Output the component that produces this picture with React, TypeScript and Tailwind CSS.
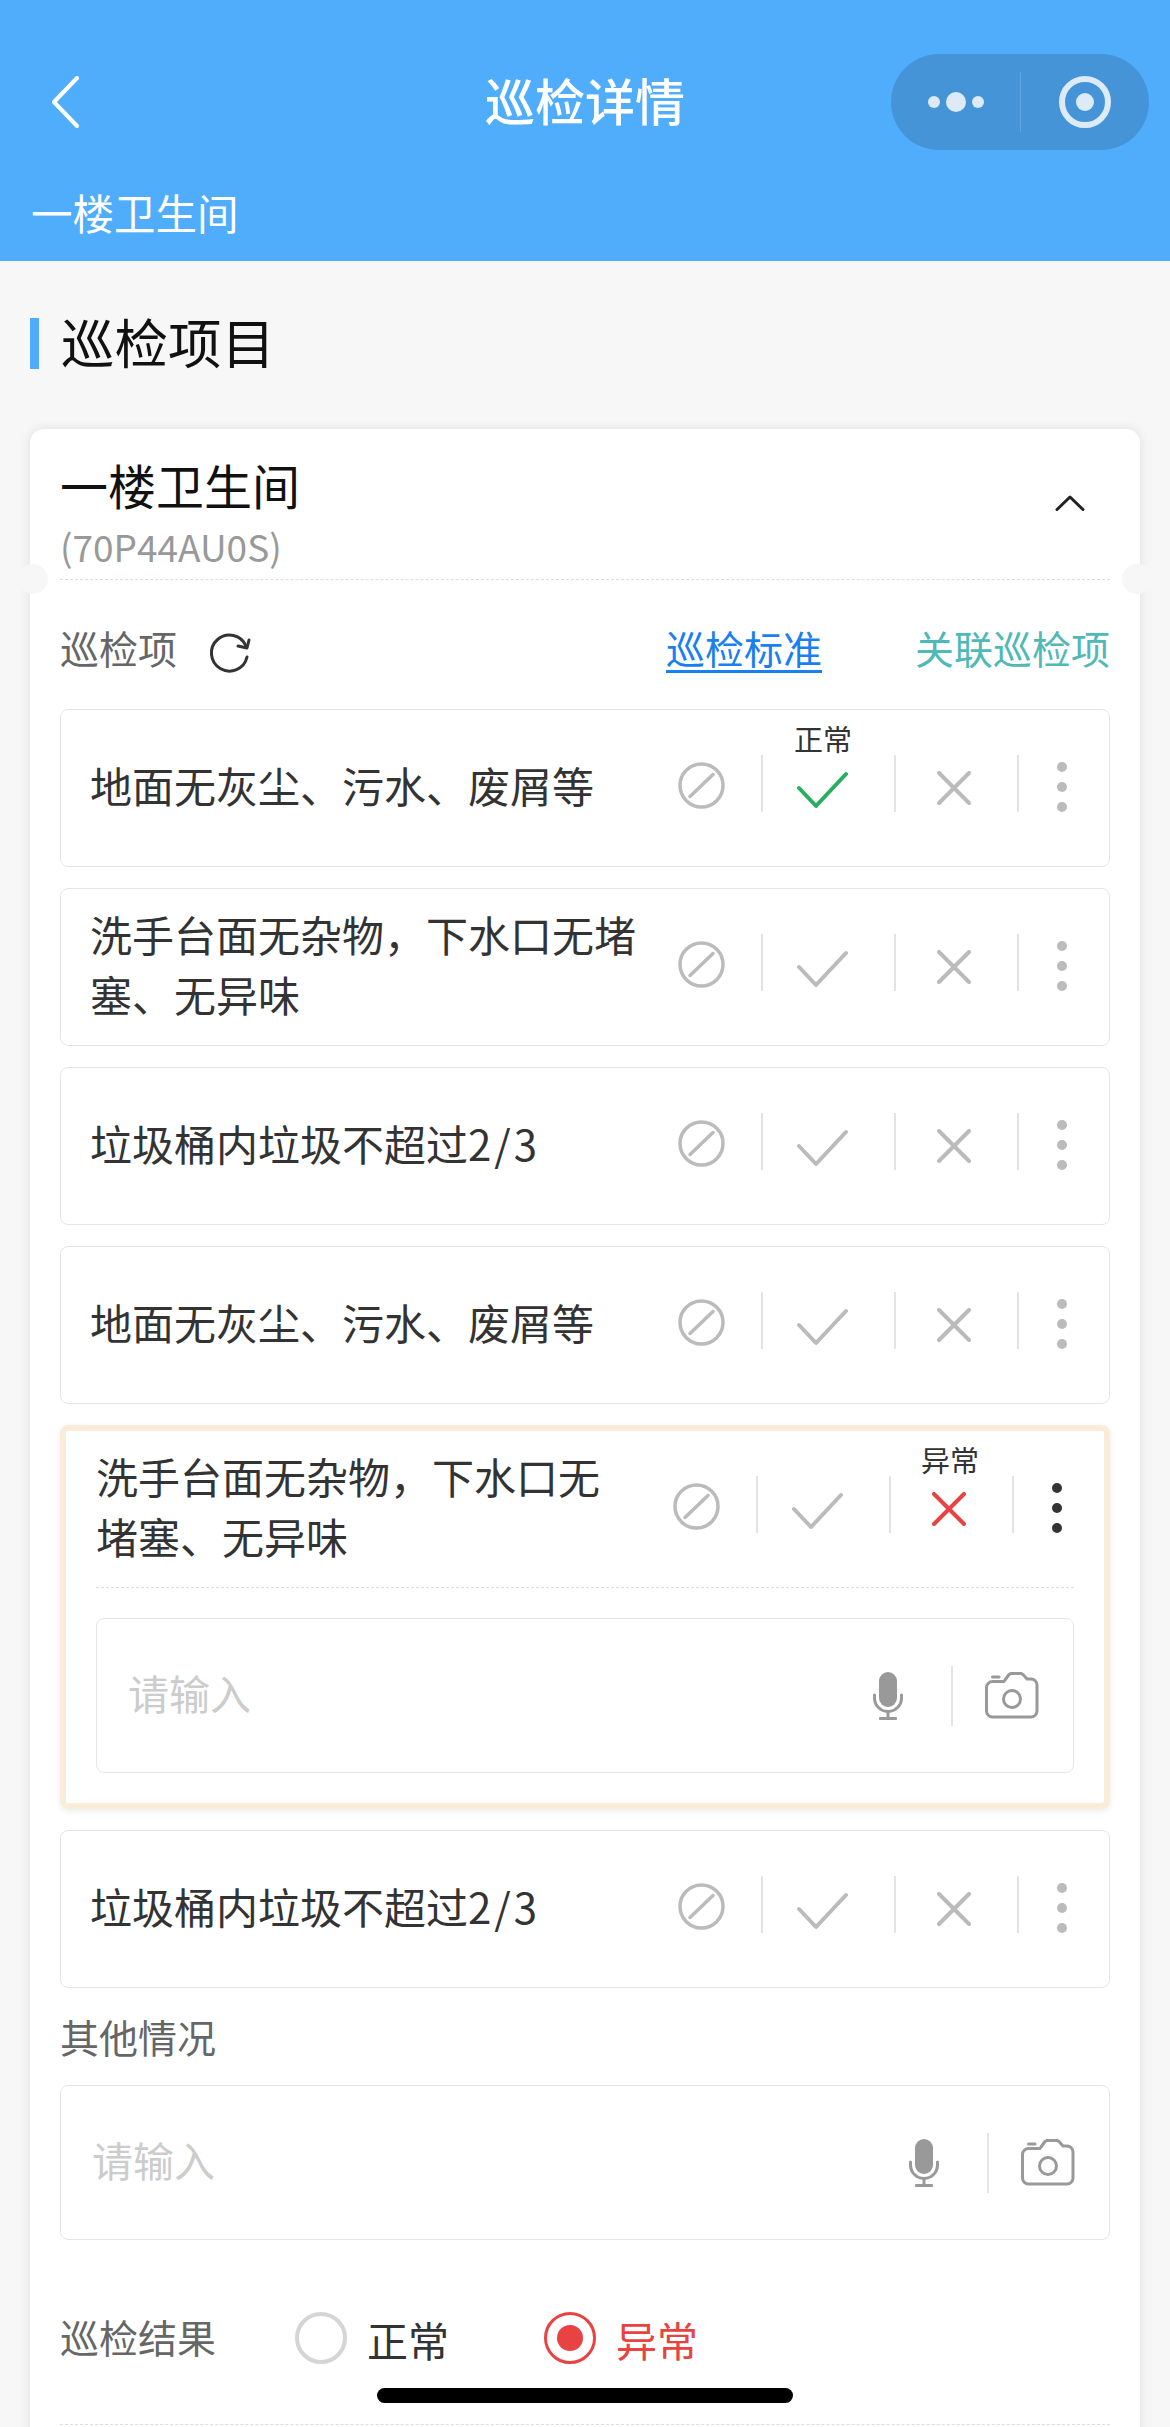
import React from "react";

const DIVIDER = "h-[57px] w-[2px] shrink-0 bg-[#e3e3e3]";

const BanIcon = () => (
  <svg width="47" height="47" viewBox="0 0 47 47" fill="none" stroke="#bbbbbb" strokeWidth="3.5" strokeLinecap="round" className="mt-[3px] shrink-0">
    <circle cx="23.5" cy="23.5" r="21.5" />
    <path d="M12 34.5 35 12.5" />
  </svg>
);

const CheckIcon = ({ color }: { color: string }) => (
  <svg width="51" height="38" viewBox="0 0 51 38" fill="none" stroke={color} strokeWidth="4" strokeLinecap="round" strokeLinejoin="round">
    <path d="M2 17 19 35 49 3" />
  </svg>
);

const CrossIcon = ({ color }: { color: string }) => (
  <svg width="34" height="34" viewBox="0 0 34 34" fill="none" stroke={color} strokeWidth="4" strokeLinecap="round">
    <path d="M2 2 32 32M32 2 2 32" />
  </svg>
);

const Dots = ({ dark }: { dark?: boolean }) => (
  <div className="ml-[38px] mt-[7px] flex shrink-0 flex-col gap-[10px]">
    {[0, 1, 2].map((i) => (
      <span key={i} className={dark ? "size-[10px] rounded-full bg-[#333333]" : "size-[10px] rounded-full bg-[#bbbbbb]"} />
    ))}
  </div>
);

// status: none | ok | bad
const Actions = ({ status, pr }: { status: "none" | "ok" | "bad"; pr: string }) => (
  <div className={`flex shrink-0 items-center pb-[9px] ${pr}`}>
    <BanIcon />
    <span className={`ml-[36px] ${DIVIDER}`} />
    <div className="relative ml-[34px] mt-[13px] flex shrink-0">
      {status === "ok" && (
        <span className="absolute -top-[50px] left-[-3px] w-[58px] text-[29px] leading-[34px] text-[#333333]">正常</span>
      )}
      <CheckIcon color={status === "ok" ? "#27ae60" : "#bbbbbb"} />
    </div>
    <span className={`ml-[46px] ${DIVIDER}`} />
    <div className="relative ml-[41px] mt-[8px] flex shrink-0">
      {status === "bad" && (
        <span className="absolute -top-[50px] left-[-11px] w-[58px] text-[29px] leading-[34px] text-[#333333]">异常</span>
      )}
      <CrossIcon color={status === "bad" ? "#e84242" : "#bbbbbb"} />
    </div>
    <span className={`ml-[46px] ${DIVIDER}`} />
    <Dots dark={status === "bad"} />
  </div>
);

const MicIcon = () => (
  <svg width="30" height="48" viewBox="0 0 30 48" fill="none" className="shrink-0">
    <rect x="6" y="0" width="18" height="35" rx="9" fill="#999999" />
    <path d="M1.5 23v3a13.5 13.5 0 0 0 27 0v-3" stroke="#999999" strokeWidth="3" strokeLinecap="round" />
    <path d="M15 39v7" stroke="#999999" strokeWidth="3" />
    <rect x="6" y="45" width="18" height="3" rx="1" fill="#999999" />
  </svg>
);

const CameraIcon = () => (
  <svg width="54" height="48" viewBox="0 0 54 48" fill="none" stroke="#999999" strokeWidth="3" strokeLinecap="round" strokeLinejoin="round" className="shrink-0">
    <path d="M7.5 5H14" />
    <path d="M19 9.5H7.5a6 6 0 0 0-6 6V39a6 6 0 0 0 6 6H46a6 6 0 0 0 6-6V13a6 6 0 0 0-6-6h-4l-4-4.5a3 3 0 0 0-2-1H26a3 3 0 0 0-2 1L20 8" />
    <circle cx="27" cy="27" r="8.5" />
  </svg>
);

const NoteInput = () => (
  <div className="flex h-[155px] items-center rounded-lg border border-[#e6e6e6] pl-[31px] pr-[34px]">
    <span className="-mt-[3px] mb-[3px] flex-1 text-[41px] text-[#cccccc]">请输入</span>
    <MicIcon />
    <span className="ml-[48px] mr-[32px] h-[60px] w-[2px] bg-[#e5e5e5]" />
    <CameraIcon />
  </div>
);

const Row = ({ text, status = "none" }: { text: React.ReactNode; status?: "none" | "ok" }) => (
  <div className="flex h-[158px] items-center rounded-lg border border-[#e6e6e6] pl-[29px]">
    <p className="-mt-[3px] mb-[3px] w-[560px] shrink-0 text-[42px] leading-[60px] text-[#333333]">{text}</p>
    <div className="ml-auto">
      <Actions status={status} pr="pr-[42px]" />
    </div>
  </div>
);

const Radio = ({ label, checked }: { label: string; checked?: boolean }) => (
  <div className="flex items-center gap-[20px]">
    <span
      className={
        checked
          ? "flex size-[52px] items-center justify-center rounded-full border-[3px] border-[#e84242]"
          : "size-[52px] rounded-full border-[4px] border-[#d5d5d5]"
      }
    >
      {checked && <span className="size-[26px] rounded-full bg-[#e84242]" />}
    </span>
    <span className={checked ? "mt-[2px] text-[41px] leading-[60px] text-[#e84242]" : "mt-[2px] text-[41px] leading-[60px] text-[#333333]"}>
      {label}
    </span>
  </div>
);

const TRASH_TEXT = (
  <>
    垃圾桶内垃圾不超过<span className="tracking-[3px]">2/3</span>
  </>
);

export default function App() {
  return (
    <div className="relative h-[2427px] w-[1170px] overflow-hidden bg-[#f7f7f7] font-['Noto_Sans_CJK_SC',sans-serif]">
      {/* top bar */}
      <header className="h-[261px] bg-[#50adfb] pt-[54px] text-white">
        <div className="grid h-[96px] grid-cols-[1fr_auto_1fr] items-center">
          <svg width="28" height="52" viewBox="0 0 28 52" fill="none" stroke="#ffffff" strokeWidth="4" strokeLinecap="round" strokeLinejoin="round" className="ml-[51px]">
            <path d="M26 2 3 26l23 24" />
          </svg>
          <h1 className="-mt-[3px] mb-[3px] text-[50px] font-medium leading-[60px]">巡检详情</h1>
          <div className="mr-[21px] flex h-[96px] w-[258px] items-center justify-self-end rounded-full bg-[#4594d7]">
            <div className="ml-[37px] flex items-center gap-[6px]">
              <span className="size-[12px] rounded-full bg-[#dcebf7]" />
              <span className="size-[20px] rounded-full bg-[#dcebf7]" />
              <span className="size-[12px] rounded-full bg-[#dcebf7]" />
            </div>
            <span className="ml-[36px] h-[60px] w-px bg-[#5fa5df]" />
            <span className="ml-[38px] flex size-[52px] items-center justify-center rounded-full border-[6px] border-[#dcebf7]">
              <span className="size-[18px] rounded-full bg-[#dcebf7]" />
            </span>
          </div>
        </div>
        <p className="ml-[31px] mt-[33px] text-[41.5px] leading-[58px]">一楼卫生间</p>
      </header>

      <main className="px-[30px] pt-[57px]">
        <div className="flex h-[51px] items-center">
          <span className="h-[51px] w-[9px] bg-[#50adfb]" />
          <h2 className="-mt-[3px] mb-[3px] ml-[22px] text-[53.5px] leading-[60px] text-[#111111]">巡检项目</h2>
        </div>

        <section className="relative mt-[60px] rounded-t-[14px] bg-white px-[30px] pb-[40px] pt-[25px] shadow-[0_0_12px_rgba(0,0,0,0.1)]">
          <span className="absolute left-[-12px] top-[135px] size-[30px] rounded-full bg-[#f7f7f7]" />
          <span className="absolute right-[-12px] top-[135px] size-[30px] rounded-full bg-[#f7f7f7]" />

          <div className="flex items-start justify-between border-b border-dashed border-[#dddddd] pb-[13px]">
            <div>
              <h3 className="text-[48px] leading-[60px] text-[#111111]">一楼卫生间</h3>
              <p className="mt-[12px] text-[37px] leading-[40px] text-[#999999]">(70P44AU0S)</p>
            </div>
            <svg width="30" height="16" viewBox="0 0 30 16" fill="none" stroke="#222222" strokeWidth="3" strokeLinecap="round" strokeLinejoin="round" className="mr-[25px] mt-[41px]">
              <path d="M2 14.5 15 2l13 12.5" />
            </svg>
          </div>

          <div className="mt-[40px] flex h-[60px] items-center text-[39px]">
            <span className="-mt-[3px] mb-[3px] text-[#666666]">巡检项</span>
            <svg width="44" height="44" viewBox="0 0 44 44" fill="none" stroke="#333333" strokeWidth="3" strokeLinecap="round" strokeLinejoin="round" className="ml-[31px] mt-[6px]">
              <path d="M39 26A18 18 0 1 1 38 15" />
              <path d="M41 9 39 17l-9-2" />
            </svg>
            <a className="-mt-[3px] mb-[3px] ml-auto text-[#1a7ff0] underline underline-offset-[6px]">巡检标准</a>
            <a className="-mt-[3px] mb-[3px] ml-[93px] text-[#4fb9b5]">关联巡检项</a>
          </div>

          <div className="mt-[29px] flex flex-col gap-[21px]">
            <Row text="地面无灰尘、污水、废屑等" status="ok" />
            <Row text="洗手台面无杂物，下水口无堵塞、无异味" />
            <Row text={TRASH_TEXT} />
            <Row text="地面无灰尘、污水、废屑等" />

            <div className="rounded-lg border-[6px] border-[#f9edd9] px-[30px] pb-[30px] shadow-[0_2px_6px_rgba(0,0,0,0.08)]">
              <div className="flex items-center border-b border-dashed border-[#dddddd] py-[18px]">
                <p className="-mt-[3px] mb-[3px] w-[540px] shrink-0 text-[42px] leading-[60px] text-[#333333]">洗手台面无杂物，下水口无堵塞、无异味</p>
                <div className="ml-auto">
                  <Actions status="bad" pr="pr-[12px]" />
                </div>
              </div>
              <div className="mt-[30px]">
                <NoteInput />
              </div>
            </div>

            <Row text={TRASH_TEXT} />
          </div>

          <p className="mt-[18px] text-[39px] leading-[60px] text-[#666666]">其他情况</p>
          <div className="mt-[19px]">
            <NoteInput />
          </div>

          <div className="mt-[68px] flex h-[60px] items-center">
            <span className="-mt-[2px] mb-[2px] text-[39px] text-[#666666]">巡检结果</span>
            <div className="ml-[79px] flex items-center gap-[95px]">
              <Radio label="正常" />
              <Radio label="异常" checked />
            </div>
          </div>
          <div className="mt-[56px] border-b border-dashed border-[#dddddd]" />
        </section>
      </main>

      {/* home indicator */}
      <span className="absolute left-[377px] top-[2388px] h-[15px] w-[416px] rounded-full bg-black" />
    </div>
  );
}
